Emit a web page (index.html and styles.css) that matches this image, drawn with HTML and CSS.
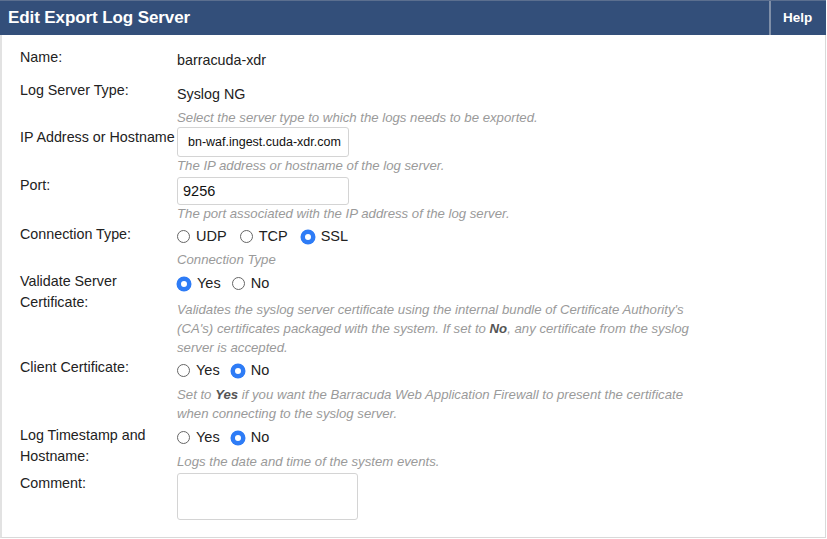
FILE: index.html
```html
<!DOCTYPE html>
<html>
<head>
<meta charset="utf-8">
<link rel="stylesheet" href="styles.css">
</head>
<body>
<div class="panel">
  <div class="header">
    <div class="title">Edit Export Log Server</div>
    <div class="help">Help</div>
  </div>
  <div class="form">
    <div class="row r-name">
      <div class="label">Name:</div>
      <div class="value"><div class="text">barracuda-xdr</div></div>
    </div>
    <div class="row r-type">
      <div class="label">Log Server Type:</div>
      <div class="value"><div class="text">Syslog NG</div>
        <div class="hint">Select the server type to which the logs needs to be exported.</div></div>
    </div>
    <div class="row r-ip">
      <div class="label">IP Address or Hostname</div>
      <div class="value"><div class="input small">bn-waf.ingest.cuda-xdr.com</div>
        <div class="hint">The IP address or hostname of the log server.</div></div>
    </div>
    <div class="row r-port">
      <div class="label">Port:</div>
      <div class="value"><div class="input port">9256</div>
        <div class="hint">The port associated with the IP address of the log server.</div></div>
    </div>
    <div class="row r-conn">
      <div class="label">Connection Type:</div>
      <div class="value"><div class="radios">
          <span class="opt"><span class="radio"></span>UDP</span>
          <span class="opt"><span class="radio"></span>TCP</span>
          <span class="opt"><span class="radio on"></span>SSL</span>
        </div>
        <div class="hint">Connection Type</div></div>
    </div>
    <div class="row r-val">
      <div class="label">Validate Server<br>Certificate:</div>
      <div class="value"><div class="radios">
          <span class="opt"><span class="radio on"></span>Yes</span>
          <span class="opt"><span class="radio"></span>No</span>
        </div>
        <div class="hint">Validates the syslog server certificate using the internal bundle of Certificate Authority's<br>(CA's) certificates packaged with the system. If set to <b>No</b>, any certificate from the syslog<br>server is accepted.</div></div>
    </div>
    <div class="row r-client">
      <div class="label">Client Certificate:</div>
      <div class="value"><div class="radios">
          <span class="opt"><span class="radio"></span>Yes</span>
          <span class="opt"><span class="radio on"></span>No</span>
        </div>
        <div class="hint">Set to <b>Yes</b> if you want the Barracuda Web Application Firewall to present the certificate<br>when connecting to the syslog server.</div></div>
    </div>
    <div class="row r-ts">
      <div class="label">Log Timestamp and<br>Hostname:</div>
      <div class="value"><div class="radios">
          <span class="opt"><span class="radio"></span>Yes</span>
          <span class="opt"><span class="radio on"></span>No</span>
        </div>
        <div class="hint">Logs the date and time of the system events.</div></div>
    </div>
    <div class="row r-comment">
      <div class="label">Comment:</div>
      <div class="value"><div class="textarea"></div></div>
    </div>
  </div>
</div>
</body>
</html>
```
FILE: styles.css
```css
html, body { margin: 0; padding: 0; background: #ffffff; }
body { font-family: "Liberation Sans", Arial, sans-serif; color: #222; width: 827px; height: 539px; overflow: hidden; }
.panel { width: 826px; height: 538px; box-sizing: border-box; border: 1px solid #d9d9d9; border-top: none; border-left: 2px solid #e2e2e2; }
.header { display: flex; height: 35px; background: #334f7a; border-top: 1px solid #5b6f8f; box-sizing: border-box; margin-left: -2px; margin-right: -1px; }
.title { flex: 1; color: #fff; font-weight: bold; font-size: 17px; padding-left: 8px; line-height: 33px; letter-spacing: -0.1px; }
.help { width: 57px; border-left: 2px solid #7f8fa8; color: #fff; font-weight: bold; font-size: 13.5px; line-height: 33px; padding-left: 12px; box-sizing: border-box; }
.form { padding: 12px 0 0 18px; font-size: 14.3px; }
.row { display: grid; grid-template-columns: 157px 1fr; align-content: start; }
.label { color: #222; line-height: 21px; }
.value { color: #222; }
.text { line-height: 21px; }
.hint { font-style: italic; color: #9a9a9a; font-size: 13.2px; line-height: 19px; white-space: nowrap; }
.hint b { color: #555; font-weight: bold; }
.input { border: 1px solid #d4d4d4; border-radius: 3px; box-sizing: border-box; width: 172px; color: #111; }
.input.small { height: 30px; line-height: 28px; font-size: 12.5px; padding-left: 10px; }
.input.port { height: 28px; line-height: 26px; font-size: 14.5px; padding-left: 5px; }
.radios { display: flex; gap: 11px; line-height: 21px; font-size: 14.5px; }
.r-conn .radios { gap: 13px; }
.opt { display: flex; align-items: center; gap: 6px; }
.radio { width: 13px; height: 13px; border: 1px solid #666; border-radius: 50%; box-sizing: border-box; background: #fff; display: inline-block; }
.radio.on { border: 4px solid #2e7cf6; background: #fff; width: 14px; height: 14px; box-shadow: 0 0 0 0.5px #2e7cf6; }

.r-name { height: 33px; }
.r-name .text { margin-top: 3px; }
.r-type { height: 47px; }
.r-type .text { margin-top: 4px; }
.r-type .hint { margin-top: 3px; }
.r-ip { height: 48px; }
.r-ip .hint { margin-top: -1px; }
.r-port { height: 49px; }
.r-port .input { margin-top: 2px; }
.r-port .hint { margin-top: -1px; }
.r-conn { height: 47px; }
.r-conn .radios { margin-top: 2px; }
.r-conn .hint { margin-top: 3px; }
.r-val { height: 86px; }
.r-val .radios { margin-top: 2px; }
.r-val .hint { margin-top: 6px; }
.r-client { height: 68px; }
.r-client .radios { margin-top: 3px; }
.r-client .hint { margin-top: 4px; }
.r-ts { height: 48px; }
.r-ts .radios { margin-top: 2px; }
.r-ts .hint { margin-top: 4px; }
.textarea { width: 181px; height: 47px; border: 1px solid #d4d4d4; border-radius: 3px; box-sizing: border-box; }
```
